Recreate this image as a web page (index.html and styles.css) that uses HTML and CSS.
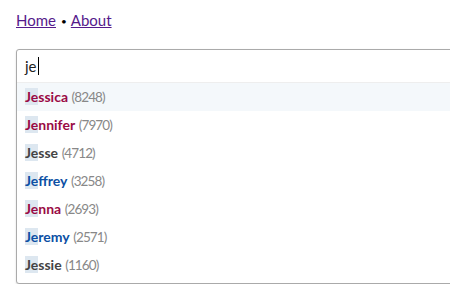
FILE: index.html
```html
<!DOCTYPE html>
<html>
<head>
<meta charset="utf-8">
<link rel="stylesheet" href="styles.css">
</head>
<body>
<nav class="nav"><a href="#home" class="link">Home</a><span class="sep">•</span><a href="#about" class="link">About</a></nav>
<div class="combo">
  <div class="field"><span class="typed">je</span><span class="caret"></span></div>
  <ul class="list">
    <li class="item active"><span class="name female"><span class="hl">Je</span>ssica</span> <span class="count">(8248)</span></li>
    <li class="item"><span class="name female"><span class="hl">Je</span>nnifer</span> <span class="count">(7970)</span></li>
    <li class="item"><span class="name neutral"><span class="hl">Je</span>sse</span> <span class="count">(4712)</span></li>
    <li class="item"><span class="name male"><span class="hl">Je</span>ffrey</span> <span class="count">(3258)</span></li>
    <li class="item"><span class="name female"><span class="hl">Je</span>nna</span> <span class="count">(2693)</span></li>
    <li class="item"><span class="name male"><span class="hl">Je</span>remy</span> <span class="count">(2571)</span></li>
    <li class="item"><span class="name neutral"><span class="hl">Je</span>ssie</span> <span class="count">(1160)</span></li>
  </ul>
</div>
</body>
</html>
```
FILE: styles.css
```css
html { overflow: hidden; }
body {
  margin: 0;
  padding: 11px 16px 0;
  font-family: Lato, "Open Sans", sans-serif;
  color: #000;
  background: #fff;
}
.nav {
  font-size: 15px;
  line-height: 19px;
}
.link { color: #551a8b; text-decoration: underline; }
.sep { font-size: 10px; vertical-align: 1px; margin: 0 4px 0 5px; }
.combo {
  margin-top: 18px;
  width: 480px;
  border: 1px solid #aaa;
  border-radius: 3px;
  box-shadow: 0 1px 2px rgba(0,0,0,0.15);
  background: #fff;
}
.field {
  height: 32px;
  display: flex;
  align-items: center;
  padding: 0 8px;
  font-size: 15px;
  border-bottom: 1px solid #eee;
}
.typed { color: #222; }
.caret {
  display: inline-block;
  width: 1px;
  height: 18px;
  background: #000;
  margin-left: 1px;
}
.list {
  list-style: none;
  margin: 0;
  padding: 0 0 4px;
}
.item {
  height: 28px;
  line-height: 27px;
  padding: 0 8px;
  font-size: 14px;
  white-space: nowrap;
}
.item.active { background: #f4f8fb; }
.name { font-weight: 700; }
.female { color: #9a0a45; }
.male { color: #0c50a4; }
.neutral { color: #444; }
.hl { background: #dde7f0; }
.count { color: #888; font-size: 13.5px; letter-spacing: -0.9px; }
```
